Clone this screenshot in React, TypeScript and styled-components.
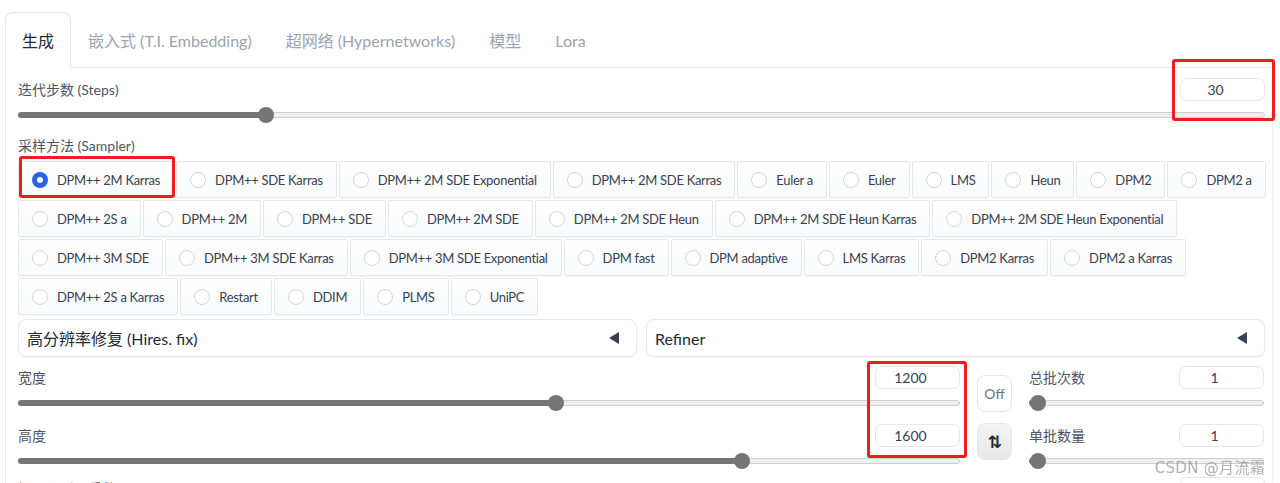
import React from "react";
import styled, { createGlobalStyle } from "styled-components";

const GlobalStyle = createGlobalStyle`
  html, body {
    margin: 0;
    padding: 0;
    background: #ffffff;
    overflow: hidden;
  }
  body {
    font-family: Lato, "Noto Sans CJK SC", sans-serif;
    color: #374151;
  }
`;

const SAMPLER_ROWS: string[][] = [
  ["DPM++ 2M Karras", "DPM++ SDE Karras", "DPM++ 2M SDE Exponential", "DPM++ 2M SDE Karras", "Euler a", "Euler", "LMS", "Heun", "DPM2", "DPM2 a"],
  ["DPM++ 2S a", "DPM++ 2M", "DPM++ SDE", "DPM++ 2M SDE", "DPM++ 2M SDE Heun", "DPM++ 2M SDE Heun Karras", "DPM++ 2M SDE Heun Exponential"],
  ["DPM++ 3M SDE", "DPM++ 3M SDE Karras", "DPM++ 3M SDE Exponential", "DPM fast", "DPM adaptive", "LMS Karras", "DPM2 Karras", "DPM2 a Karras"],
  ["DPM++ 2S a Karras", "Restart", "DDIM", "PLMS", "UniPC"],
];

const TABS = ["生成", "嵌入式 (T.I. Embedding)", "超网络 (Hypernetworks)", "模型", "Lora"];

const Page = styled.div`
  padding: 12px 7px 0 5px;
`;

const TabBar = styled.div`
  display: flex;
  border-bottom: 1px solid #e5e7eb;
`;

const Tab = styled.div<{ $active?: boolean }>`
  height: 54px;
  display: flex;
  align-items: center;
  padding: 0 16px;
  font-size: 16px;
  color: ${(p) => (p.$active ? "#1f2937" : "#9ca3af")};
  background: #fff;
  border: 1px solid ${(p) => (p.$active ? "#e5e7eb" : "transparent")};
  border-bottom: none;
  border-radius: 8px 8px 0 0;
  margin-bottom: -1px;
  ${(p) => p.$active && "padding-bottom: 1px;"}
`;

const Panel = styled.div`
  border-left: 1px solid #e5e7eb;
  border-right: 1px dotted #e5e7eb;
  padding: 9px 7px 0 12px;
  display: flex;
  flex-direction: column;
`;

const Field = styled.div`
  position: relative;
  display: flex;
  flex-direction: column;
`;

const FieldHead = styled.div`
  display: flex;
  justify-content: space-between;
  align-items: center;
  height: 24px;
`;

const Label = styled.span`
  font-size: 14px;
  color: #4b5563;
`;

const NumberBox = styled.div`
  width: 85px;
  height: 23px;
  box-sizing: border-box;
  border: 1px solid #e5e7eb;
  border-radius: 7px;
  display: flex;
  align-items: center;
  justify-content: center;
  padding-right: 14px;
  font-size: 14px;
  color: #374151;
  background: #fff;
`;

const Track = styled.div`
  position: relative;
  height: 6px;
  margin-top: 11px;
  border-radius: 4px;
  background: #efefef;
  border: 1px solid #cfcfcf;
  box-sizing: border-box;
`;

const Fill = styled.div`
  position: absolute;
  left: -1px;
  top: -1px;
  bottom: -1px;
  border-radius: 4px;
  background: #757575;
`;

const Thumb = styled.div`
  position: absolute;
  top: 50%;
  width: 16px;
  height: 16px;
  margin: -8px 0 0 -8px;
  border-radius: 50%;
  background: #757575;
`;

const SectionLabel = styled(Label)`
  margin-top: 16px;
  height: 22px;
  display: flex;
  align-items: center;
`;

const RadioRows = styled.div`
  display: flex;
  flex-direction: column;
  gap: 2px;
  margin-top: 5px;
`;

const RadioRow = styled.div`
  display: flex;
  gap: 2px;
`;

const RadioItem = styled.label`
  position: relative;
  display: flex;
  align-items: center;
  gap: 9px;
  height: 37px;
  box-sizing: border-box;
  padding: 0 13px;
  border: 1px solid #e5e7eb;
  border-radius: 2px;
  background: linear-gradient(#ffffff, #f9fafb);
  box-shadow: 0 1px 1px rgba(0, 0, 0, 0.03);
  font-size: 13px;
  letter-spacing: -0.3px;
  color: #374151;
  white-space: nowrap;
`;

const RadioDot = styled.span<{ $checked?: boolean }>`
  width: 16px;
  height: 16px;
  flex: none;
  box-sizing: border-box;
  border-radius: 50%;
  border: ${(p) => (p.$checked ? "5px solid #2563eb" : "1px solid #d1d5db")};
  background: #fff;
`;

const RedFrame = styled.div<{ $t: number; $r: number; $b: number; $l: number }>`
  position: absolute;
  top: ${(p) => p.$t}px;
  right: ${(p) => p.$r}px;
  bottom: ${(p) => p.$b}px;
  left: ${(p) => p.$l}px;
  border: 3px solid #f21c1c;
  border-radius: 3px;
  pointer-events: none;
`;

const AccordionRow = styled.div`
  display: flex;
  gap: 9px;
  margin-top: 4px;
`;

const Accordion = styled.div`
  flex: 1;
  height: 38px;
  box-sizing: border-box;
  border: 1px solid #e5e7eb;
  border-radius: 8px;
  box-shadow: 0 1px 2px rgba(0, 0, 0, 0.04);
  display: flex;
  align-items: center;
  justify-content: space-between;
  padding: 0 17px 0 8px;
  font-size: 16px;
  color: #1f2937;
`;

const Caret = styled.span`
  width: 0;
  height: 0;
  border-top: 6px solid transparent;
  border-bottom: 6px solid transparent;
  border-right: 10px solid #374151;
`;

const SizeGrid = styled.div`
  display: grid;
  grid-template-columns: 942px 35px 235px;
  column-gap: 17px;
  margin-top: 8px;
`;

const Column = styled.div`
  position: relative;
  display: flex;
  flex-direction: column;
  gap: 17px;
`;

const ButtonColumn = styled.div`
  display: flex;
  flex-direction: column;
  gap: 11px;
  padding-top: 10px;
`;

const SquareButton = styled.div<{ $tone?: "plain" | "gray" }>`
  width: 35px;
  height: 37px;
  box-sizing: border-box;
  border: 1px solid #e5e7eb;
  border-radius: 8px;
  display: flex;
  align-items: center;
  justify-content: center;
  font-size: ${(p) => (p.$tone === "gray" ? 17 : 14)}px;
  color: ${(p) => (p.$tone === "gray" ? "#1f2937" : "#6b7280")};
  background: ${(p) => (p.$tone === "gray" ? "linear-gradient(#f3f4f6, #e5e7eb)" : "#fff")};
  font-family: ${(p) => (p.$tone === "gray" ? '"DejaVu Sans", sans-serif' : "inherit")};
  font-weight: ${(p) => (p.$tone === "gray" ? 700 : 400)};
`;

const Watermark = styled.div`
  position: fixed;
  right: 15px;
  bottom: 6px;
  font-size: 15px;
  color: rgba(150, 150, 150, 0.75);
  letter-spacing: 0.3px;
  font-family: "DejaVu Sans", "Noto Sans CJK SC", sans-serif;
`;

function Slider({ min, max, value }: { min: number; max: number; value: number }) {
  const frac = (value - min) / (max - min);
  const pos = `calc(8px + (100% - 16px) * ${frac})`;
  return (
    <Track>
      <Fill style={{ width: `calc(${pos} + 1px)` }} />
      <Thumb style={{ left: pos }} />
    </Track>
  );
}

function SliderField({ label, min, max, value }: { label: string; min: number; max: number; value: number }) {
  return (
    <Field>
      <FieldHead>
        <Label>{label}</Label>
        <NumberBox>{value}</NumberBox>
      </FieldHead>
      <Slider min={min} max={max} value={value} />
    </Field>
  );
}

export default function App() {
  const selected = "DPM++ 2M Karras";
  return (
    <Page>
      <GlobalStyle />
      <TabBar>
        {TABS.map((t, i) => (
          <Tab key={t} $active={i === 0}>
            {t}
          </Tab>
        ))}
      </TabBar>
      <Panel>
        <Field>
          <SliderField label="迭代步数 (Steps)" min={1} max={150} value={30} />
          <RedFrame $t={-18} $r={-10} $b={-3} $l={1154} />
        </Field>

        <SectionLabel>采样方法 (Sampler)</SectionLabel>
        <RadioRows>
          {SAMPLER_ROWS.map((row, ri) => (
            <RadioRow key={ri}>
              {row.map((name) => (
                <RadioItem key={name}>
                  <RadioDot $checked={name === selected} />
                  {name}
                  {name === selected && <RedFrame $t={-6} $r={-2} $b={-1} $l={0} />}
                </RadioItem>
              ))}
            </RadioRow>
          ))}
        </RadioRows>

        <AccordionRow>
          <Accordion>
            高分辨率修复 (Hires. fix)
            <Caret />
          </Accordion>
          <Accordion>
            Refiner
            <Caret />
          </Accordion>
        </AccordionRow>

        <SizeGrid>
          <Column>
            <SliderField label="宽度" min={64} max={2048} value={1200} />
            <SliderField label="高度" min={64} max={2048} value={1600} />
            <RedFrame $t={-4} $r={-7} $b={6} $l={849} />
          </Column>
          <ButtonColumn>
            <SquareButton>Off</SquareButton>
            <SquareButton $tone="gray">⇅</SquareButton>
          </ButtonColumn>
          <Column>
            <SliderField label="总批次数" min={1} max={100} value={1} />
            <SliderField label="单批数量" min={1} max={8} value={1} />
          </Column>
        </SizeGrid>

        <Field style={{ marginTop: 12 }}>
          <FieldHead>
            <Label>提示词引导系数 (CFG Scale)</Label>
            <NumberBox>7</NumberBox>
          </FieldHead>
        </Field>
      </Panel>
      <Watermark>CSDN @月流霜</Watermark>
    </Page>
  );
}
